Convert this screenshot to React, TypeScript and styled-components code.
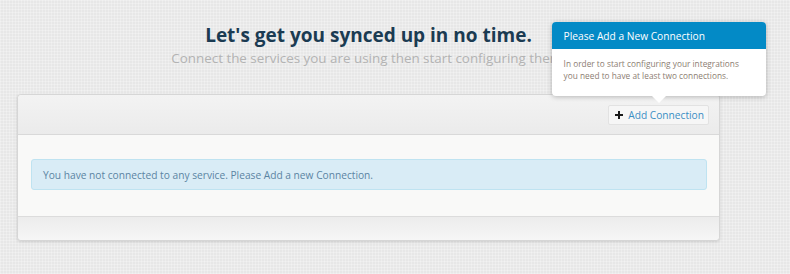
import styled, { createGlobalStyle } from "styled-components"

const GlobalStyle = createGlobalStyle`
  html, body {
    margin: 0;
    padding: 0;
  }
  body {
    font-family: "Open Sans", "Liberation Sans", sans-serif;
    background-color: #e7e7e7;
    background-image:
      repeating-linear-gradient(0deg, rgba(255,255,255,0.25) 0 1px, transparent 1px 3px),
      repeating-linear-gradient(90deg, rgba(255,255,255,0.25) 0 1px, transparent 1px 3px);
    min-height: 274px;
  }
`

const Page = styled.div`
  width: 703px;
  margin-left: 17px;
  padding-top: 22px;
`

const Intro = styled.div`
  text-align: center;
  margin-bottom: 26px;
`

const Title = styled.h1`
  margin: 0;
  font-size: 19px;
  line-height: 26px;
  font-weight: 700;
  color: #1b3b52;
`

const Subtitle = styled.p`
  margin: 0;
  font-size: 13.4px;
  line-height: 20px;
  color: #b3b3b3;
`

const Panel = styled.div`
  background: #f9f9f8;
  border: 1px solid #d6d6d6;
  border-radius: 4px;
  box-shadow: 0 1px 3px rgba(0, 0, 0, 0.12);
`

const PanelHeader = styled.div`
  height: 40px;
  display: flex;
  justify-content: flex-end;
  align-items: flex-start;
  padding: 10px 10px 0 0;
  box-sizing: border-box;
  background: linear-gradient(#f3f3f3, #ebebeb);
  border-bottom: 1px solid #d9d9d9;
  border-radius: 4px 4px 0 0;
`

const PanelBody = styled.div`
  height: 82px;
  box-sizing: border-box;
  padding: 24px 12px 0 13px;
  border-bottom: 1px solid #dcdcdc;
`

const PanelFooter = styled.div`
  height: 23px;
  background: linear-gradient(#ececec, #f6f6f6);
  border-radius: 0 0 4px 4px;
`

const Alert = styled.div`
  height: 31px;
  box-sizing: border-box;
  display: flex;
  align-items: center;
  padding-left: 11px;
  background: #d9ecf6;
  border: 1px solid #bfe3f1;
  border-radius: 3px;
  color: #5b84a3;
  font-size: 10.2px;
`

const ButtonWrap = styled.div`
  position: relative;
`

const Button = styled.button`
  display: flex;
  align-items: center;
  gap: 5px;
  height: 20px;
  padding: 0 4px 0 6px;
  font-family: inherit;
  font-size: 10.2px;
  color: #3b8ec4;
  background: #f6f6f6;
  border: 1px solid #e2e2e2;
  border-radius: 2px;
  cursor: pointer;
`

const Popover = styled.div`
  position: absolute;
  bottom: 29px;
  left: 50%;
  transform: translateX(-50%);
  width: 214px;
  background: #fff;
  border-radius: 4px;
  box-shadow: 0 1px 5px rgba(0, 0, 0, 0.25);

  &::after {
    content: "";
    position: absolute;
    left: 50%;
    bottom: -7px;
    margin-left: -7px;
    border-width: 7px 7px 0;
    border-style: solid;
    border-color: #fff transparent transparent;
  }
`

const PopoverTitle = styled.div`
  height: 27px;
  display: flex;
  align-items: center;
  padding-left: 12px;
  background: #038ac6;
  color: #fff;
  font-size: 10.2px;
  border-radius: 4px 4px 0 0;
`

const PopoverBody = styled.div`
  padding: 9px 12px 14px;
  font-size: 8.3px;
  line-height: 12px;
  color: #8c7d72;
`

function PlusIcon() {
  return (
    <svg width="8" height="8" viewBox="0 0 8 8">
      <path d="M3 0h2v3h3v2H5v3H3V5H0V3h3z" fill="#1a1a1a" />
    </svg>
  )
}

export default function App() {
  return (
    <>
      <GlobalStyle />
      <Page>
        <Intro>
          <Title>Let's get you synced up in no time.</Title>
          <Subtitle>Connect the services you are using then start configuring them.</Subtitle>
        </Intro>
        <Panel>
          <PanelHeader>
            <ButtonWrap>
              <Popover>
                <PopoverTitle>Please Add a New Connection</PopoverTitle>
                <PopoverBody>
                  In order to start configuring your integrations you need to have at least two connections.
                </PopoverBody>
              </Popover>
              <Button>
                <PlusIcon />
                Add Connection
              </Button>
            </ButtonWrap>
          </PanelHeader>
          <PanelBody>
            <Alert>You have not connected to any service. Please Add a new Connection.</Alert>
          </PanelBody>
          <PanelFooter />
        </Panel>
      </Page>
    </>
  )
}
